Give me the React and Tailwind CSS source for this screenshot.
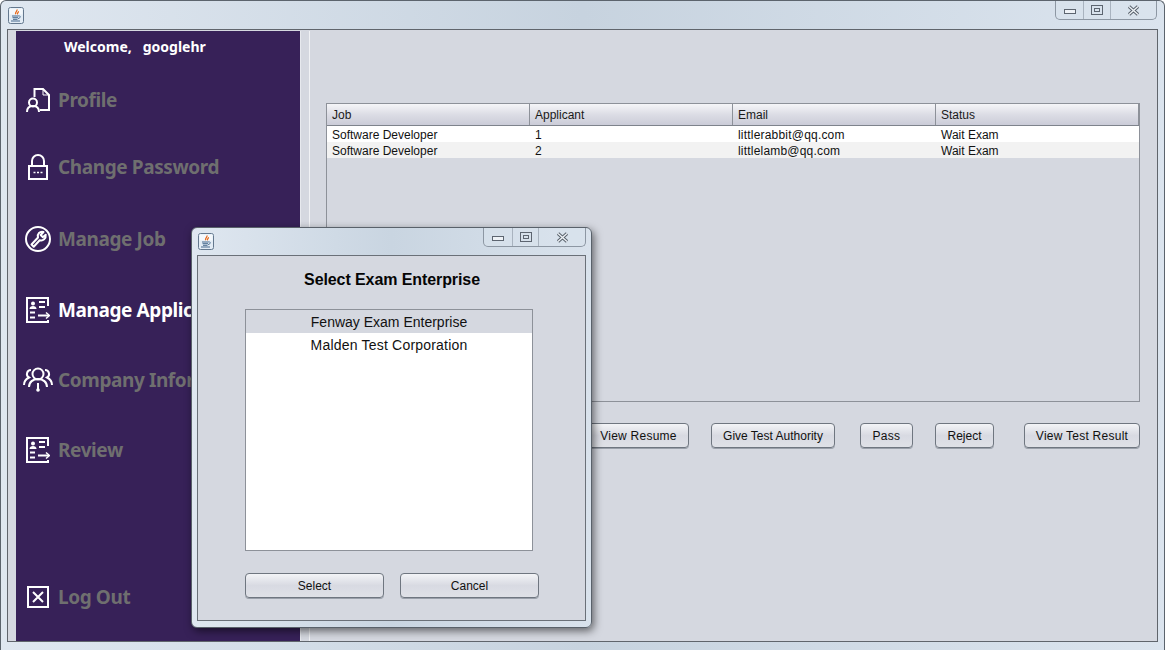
import React from "react";

const JavaIcon = () => (
  <svg width="16" height="17" viewBox="0 0 16 17" className="shrink-0">
    <rect x="0.5" y="0.5" width="15" height="16" rx="2" fill="#e3ecf5" stroke="#64788e" />
    <path d="M1.500 1.500h13v6h-13z" fill="#f4f8fc" />
    <path d="M8.800 2.500c1.200 1.600-2.300 2.600-1.100 4.800M10.400 4.200c.5 1.100-1.700 2-.8 3.100" fill="none" stroke="#e8691a" strokeWidth="1.300" />
    <path d="M4 9h6.500M4.500 10.700h5.500M5 12.300h4.500M3 14h9" stroke="#46698d" strokeWidth="1" />
    <path d="M10.500 8.800c2.400-.3 2.400 2.300-.5 2.800" fill="none" stroke="#46698d" strokeWidth="0.900" />
  </svg>
);

const WinControls = ({ w, d1, d2, h }) => (
  <div className={`flex border border-t-0 border-[#8d97a3] rounded-b-[5px] bg-[#d9e2ec]/60 ${w} ${h}`}>
    <div className={`flex items-center justify-center border-r border-[#a9b3bf] ${d1}`}>
      <div className="w-[12px] h-[5px] mt-[3px] border border-[#5d6570] bg-[#eef2f6]" />
    </div>
    <div className={`flex items-center justify-center border-r border-[#a9b3bf] ${d2}`}>
      <div className="w-[12px] h-[10px] border border-[#5d6570] flex items-center justify-center">
        <div className="w-[6px] h-[4px] border border-[#5d6570]" />
      </div>
    </div>
    <div className="flex-1 flex items-center justify-center">
      <svg width="13" height="11" viewBox="0 0 13 11">
        <path d="M2 1.500l9 8M11 1.500l-9 8" stroke="#59626d" strokeWidth="3.400" />
        <path d="M2 1.500l9 8M11 1.500l-9 8" stroke="#eef2f6" strokeWidth="1.400" />
      </svg>
    </div>
  </div>
);

const s = { fill: "none", stroke: "#fff", strokeWidth: 2 };

const ProfileIcon = () => (
  <svg width="24" height="24" viewBox="0 0 24 24">
    <path d="M8.500 9V1H17l6 6v15h-9" {...s} />
    <path d="M17 1v6h6" fill="none" stroke="#fff" strokeWidth="1" />
    <circle cx="7" cy="14.500" r="4" {...s} />
    <path d="M1 24c0-4 2.500-6 6-6s6 2 6 6" {...s} />
  </svg>
);
const LockIcon = () => (
  <svg width="20" height="26" viewBox="0 0 20 26">
    <rect x="1" y="12" width="18" height="13" {...s} />
    <path d="M4 12V7a6 6 0 0 1 12 0v5" {...s} />
    <path d="M5.500 18.500h2M9 18.500h2M12.500 18.500h2" stroke="#fff" strokeWidth="1.500" />
  </svg>
);
const WrenchIcon = () => (
  <svg width="26" height="26" viewBox="0 0 26 26">
    <circle cx="13" cy="13" r="12" {...s} />
    <path d="M6.500 18.500l6.500-7c-1-3.500 1.800-6.500 5.500-5.500l-2.800 3 2 2.200 3-2.500c.6 3.800-2.800 6.800-6 5.500l-6 6.500z" {...s} strokeLinejoin="round" />
  </svg>
);
const FormIcon = () => (
  <svg width="24" height="26" viewBox="0 0 24 26">
    <path d="M22 9V1H1v24h21v-2" {...s} />
    <circle cx="7" cy="6.500" r="2" fill="#fff" />
    <path d="M3.500 12c0-2 1.500-3 3.500-3s3.500 1 3.500 3z" fill="#fff" />
    <path d="M13 5h6M13 10h6M4 15.500h5M4 20.500h5M12 18.500h11" stroke="#fff" strokeWidth="2" />
    <path d="M20 15.500l3.500 3-3.500 3" fill="none" stroke="#fff" strokeWidth="1.500" />
  </svg>
);
const CompanyIcon = () => (
  <svg width="30" height="26" viewBox="0 0 30 26">
    <circle cx="15" cy="7" r="5.500" {...s} />
    <path d="M6 20c0-5 4-8 9-8s9 3 9 8" {...s} />
    <path d="M8 3a4 4 0 0 0-2 7.500C3 12 1 14 1 18M22 3a4 4 0 0 1 2 7.500C27 12 29 14 29 18" {...s} />
    <path d="M15 16v6" stroke="#fff" strokeWidth="2" />
    <circle cx="15" cy="23" r="1.800" fill="#fff" />
  </svg>
);
const LogoutIcon = () => (
  <svg width="22" height="22" viewBox="0 0 22 22">
    <rect x="1" y="1" width="20" height="20" {...s} />
    <path d="M6 6l10 10M16 6L6 16" {...s} />
  </svg>
);

const menu = [
  { label: "Profile", icon: <ProfileIcon />, cls: "mt-[19px]" },
  { label: "Change Password", icon: <LockIcon />, cls: "mt-[27px]" },
  { label: "Manage Job", icon: <WrenchIcon />, cls: "mt-[32px]" },
  { label: "Manage Applicant", icon: <FormIcon />, cls: "mt-[31px]", active: true },
  { label: "Company Information", icon: <CompanyIcon />, cls: "mt-[30px]" },
  { label: "Review", icon: <FormIcon />, cls: "mt-[30px]" },
];

const MenuRow = ({ label, icon, cls, active }) => (
  <div className={`flex items-center h-[40px] whitespace-nowrap ${cls}`}>
    <div className="w-[44px] flex justify-center shrink-0">{icon}</div>
    <span className={`-ml-[2px] text-[19px] tracking-[-0.4px] font-bold font-['Noto_Sans',sans-serif] ${active ? "text-white" : "text-[#6f6f6f]"}`}>{label}</span>
  </div>
);

const Btn = ({ children, cls }) => (
  <button className={`h-[25px] rounded-[4px] border border-[#6f7680] bg-gradient-to-b from-[#f3f4f7] via-[#d8dae2] to-[#dfe1e7] text-[12px] text-[#111] font-['Liberation_Sans',sans-serif] shadow-[0_1px_0_#9aa0aa] ${cls}`}>
    {children}
  </button>
);

const rows = [
  ["Software Developer", "1", "littlerabbit@qq.com", "Wait Exam"],
  ["Software Developer", "2", "littlelamb@qq.com", "Wait Exam"],
];

export default function App() {
  return (
    <div className="relative w-[1165px] h-[650px] overflow-hidden flex flex-col rounded-t-[6px] border-t border-x border-[#5c646d] bg-gradient-to-r from-[#dfe7f0] via-[#c7d3df] to-[#dbe4ee] font-['Liberation_Sans',sans-serif]">
      {/* Title bar */}
      <div className="h-[28px] shrink-0 flex justify-between items-start pl-[7px] pr-[7px]">
        <div className="mt-[6px]"><JavaIcon /></div>
        <WinControls w="w-[102px]" d1="w-[28px]" d2="w-[27px]" h="h-[19px]" />
      </div>
      {/* Content frame */}
      <div className="mx-[6px] h-[613px] shrink-0 border border-[#60656c] bg-[#d5d8e0] flex pt-[1px]">
        <aside className="ml-[8px] w-[284px] bg-[#372158] flex flex-col overflow-hidden pb-[24px]">
          <div className="h-[30px] pl-[48px] flex items-center text-[14px] font-bold text-white font-['Noto_Sans',sans-serif] whitespace-pre">
            Welcome,   googlehr
          </div>
          {menu.map((m) => <MenuRow key={m.label} {...m} />)}
          <div className="mt-auto"><MenuRow label="Log Out" icon={<LogoutIcon />} cls="" /></div>
        </aside>
        {/* Split divider */}
        <div className="w-[10px] shrink-0 border-l border-l-[#e7e9ee] border-r border-r-[#f1f2f5]" />
        {/* Right pane */}
        <main className="flex-1 pl-[16px] pr-[17px] pt-[72px] flex flex-col">
          <div className="h-[299px] border border-[#8d9199]">
            <div className="grid grid-cols-4 h-[22px] border-b border-[#7e838c] bg-gradient-to-b from-[#f5f5f8] via-[#dcdde5] to-[#cbccd8] text-[12px] text-[#1a1a1a]">
              {["Job", "Applicant", "Email", "Status"].map((h) => (
                <div key={h} className="pl-[5px] flex items-center border-r border-[#8d9199]">{h}</div>
              ))}
            </div>
            {rows.map((r, i) => (
              <div key={i} className={`grid grid-cols-4 h-[16px] text-[12px] text-[#111] ${i === 0 ? "bg-white" : "bg-[#f2f2f2]"}`}>
                {r.map((c, j) => (
                  <div key={j} className={`pl-[5px] flex items-center ${j === 2 ? "tracking-[0.2px]" : ""}`}>{c}</div>
                ))}
              </div>
            ))}
          </div>
          <div className="mt-[21px] flex justify-end">
            <Btn cls="w-[101px] tracking-[0.25px]">View Resume</Btn>
            <Btn cls="w-[124px] ml-[22px]">Give Test Authority</Btn>
            <Btn cls="w-[53px] ml-[25px] tracking-[0.3px]">Pass</Btn>
            <Btn cls="w-[59px] ml-[22px]">Reject</Btn>
            <Btn cls="w-[116px] ml-[30px] tracking-[0.25px]">View Test Result</Btn>
          </div>
        </main>
      </div>

      {/* Dialog */}
      <div className="absolute left-[190px] top-[226px] w-[401px] h-[401px] rounded-[6px] border border-[#59616a] bg-gradient-to-r from-[#dfe7f0] via-[#c9d5e1] to-[#d9e2ec] shadow-[2px_3px_8px_rgba(0,0,0,0.55)] flex flex-col">
        <div className="h-[27px] shrink-0 flex justify-between items-start pl-[6px] pr-[5px]">
          <div className="mt-[5px]"><JavaIcon /></div>
          <WinControls w="w-[103px]" d1="w-[29px]" d2="w-[26px]" h="h-[19px]" />
        </div>
        <div className="mx-[5px] h-[366px] border border-[#6a7078] bg-[#d5d8e0] flex flex-col">
          <div className="h-[47px] flex items-center justify-center pl-[1px] text-[16px] tracking-[-0.09px] font-bold text-[#050505] pt-[1px]">
            Select Exam Enterprise
          </div>
          <div className="mt-[6px] ml-[47px] w-[288px] h-[242px] border border-[#8d9199] bg-white text-[14px] text-[#111]">
            <div className="h-[23px] pt-[1px] bg-[#d5d8e0] flex items-center justify-center">Fenway Exam Enterprise</div>
            <div className="h-[23px] pt-[1px] tracking-[0.2px] flex items-center justify-center">Malden Test Corporation</div>
          </div>
          <div className="mt-[22px] ml-[47px] flex gap-[16px]">
            <Btn cls="w-[139px]">Select</Btn>
            <Btn cls="w-[139px]">Cancel</Btn>
          </div>
        </div>
      </div>
    </div>
  );
}
